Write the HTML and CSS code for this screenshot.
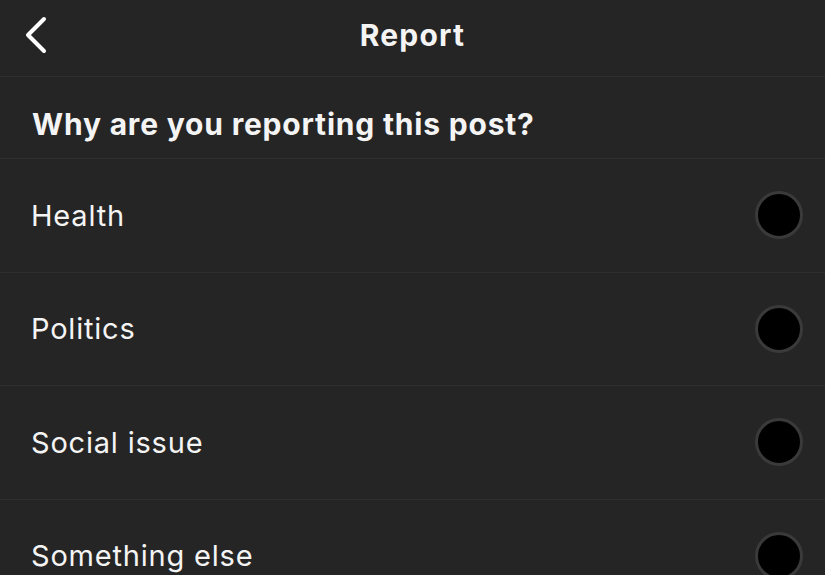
FILE: index.html
```html
<!DOCTYPE html>
<html lang="en">
<head>
    <meta charset="UTF-8">
    <meta name="viewport" content="width=device-width, initial-scale=1.0">
    <title>Report</title>
    <link rel="stylesheet" href="styles.css">
</head>
<body>
    <div class="screen">
        <header class="topbar">
            <button class="back" aria-label="Back">
                <svg width="26" height="38" viewBox="0 0 26 38">
                    <path d="M21 3 L5 19 L21 35" fill="none" stroke="#fff" stroke-width="4" stroke-linecap="round" stroke-linejoin="round"/>
                </svg>
            </button>
            <h1>Report</h1>
        </header>

        <div class="question">Why are you reporting this post?</div>

        <ul class="options">
            <li class="option"><span>Health</span><span class="radio"></span></li>
            <li class="option"><span>Politics</span><span class="radio"></span></li>
            <li class="option"><span>Social issue</span><span class="radio"></span></li>
            <li class="option"><span>Something else</span><span class="radio"></span></li>
        </ul>
    </div>
</body>
</html>
```

FILE: styles.css
```css
* {
    margin: 0;
    padding: 0;
    box-sizing: border-box;
}

html, body {
    height: 100%;
    overflow: hidden;
}

body {
    font-family: Inter, "Liberation Sans", sans-serif;
    background: #252525;
    color: #f4f4f4;
}

.screen {
    display: flex;
    flex-direction: column;
}

.topbar {
    position: relative;
    height: 77px;
    display: flex;
    align-items: center;
    justify-content: center;
    border-bottom: 1px solid #2f2f2f;
}

.topbar h1 {
    font-size: 30px;
    font-weight: 700;
    letter-spacing: 1.2px;
    padding-bottom: 6px;
}

.back {
    position: absolute;
    left: 23px;
    top: 16px;
    background: none;
    border: none;
    display: flex;
}

.question {
    height: 82px;
    display: flex;
    align-items: center;
    padding-left: 32px;
    padding-top: 12px;
    font-size: 30px;
    font-weight: 700;
    letter-spacing: 0.8px;
    border-bottom: 1px solid #2f2f2f;
}

.options {
    list-style: none;
}

.option {
    height: 113.5px;
    display: flex;
    align-items: center;
    justify-content: space-between;
    padding: 0 22px 0 31px;
    font-size: 29px;
    letter-spacing: 0.8px;
    border-bottom: 1px solid #2f2f2f;
}

.radio {
    width: 48px;
    height: 48px;
    border-radius: 50%;
    background: #000;
    border: 3px solid #3a3a3a;
}
```
